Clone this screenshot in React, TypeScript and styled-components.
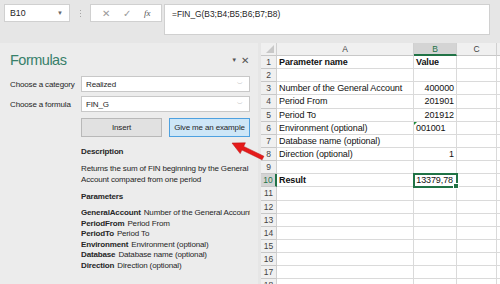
import { Fragment } from "react";
import styled, { createGlobalStyle, css } from "styled-components";

const GlobalStyle = createGlobalStyle`
  html, body { margin: 0; padding: 0; }
  body {
    background: #e6e6e6;
    font-family: "Liberation Sans", "Noto Sans", sans-serif;
    color: #262626;
  }
`;

const Window = styled.div`
  position: relative;
  width: 500px;
  height: 284px;
  overflow: hidden;
  display: flex;
  flex-direction: column;
  background: #e6e6e6;
`;

const TopBar = styled.div`
  height: 43px;
  flex-shrink: 0;
  display: flex;
  align-items: flex-start;
  padding: 4px 0 0 4px;
  box-sizing: border-box;
`;

const NameBox = styled.div`
  width: 66px;
  height: 18px;
  box-sizing: border-box;
  background: #fff;
  border: 1px solid #d0d0d0;
  display: flex;
  align-items: center;
  justify-content: space-between;
  padding: 0 6px 0 5px;
  font-size: 8.8px;
`;

const Caret = styled.span`
  font-size: 6px;
  color: #666;
`;

const Grip = styled.div`
  width: 20px;
  height: 18px;
  display: flex;
  flex-direction: column;
  align-items: center;
  justify-content: center;
  gap: 2px;

  span {
    width: 1px;
    height: 1px;
    background: #a6a6a6;
  }
`;

const FxBox = styled.div`
  width: 72px;
  height: 18px;
  box-sizing: border-box;
  background: #fff;
  border: 1px solid #d0d0d0;
  display: flex;
  align-items: center;
  justify-content: space-around;
  padding: 0 4px;
  color: #9a9a9a;
  font-size: 10px;
`;

const Fx = styled.span`
  font-family: "Liberation Serif", serif;
  font-style: italic;
  font-size: 9px;
  color: #555;
`;

const FormulaInput = styled.div`
  margin-left: 2px;
  width: 326px;
  height: 31px;
  box-sizing: border-box;
  background: #fff;
  border: 1px solid #d0d0d0;
  padding: 3px 7px;
  font-size: 8.4px;
  line-height: 12px;
`;

const Main = styled.div`
  flex: 1;
  display: flex;
  min-height: 0;
`;

const Panel = styled.div`
  width: 258px;
  flex-shrink: 0;
  box-sizing: border-box;
  padding: 8px 8px 0 10px;
  background: #ececec;
  font-size: 8px;
  letter-spacing: -0.15px;
`;

const PanelHeader = styled.div`
  display: flex;
  align-items: center;
  justify-content: space-between;
  height: 18px;
`;

const Title = styled.h2`
  margin: 0;
  font-family: "Liberation Sans", sans-serif;
  font-weight: 400;
  font-size: 14.5px;
  letter-spacing: -0.5px;
  color: #37806a;
`;

const PaneControls = styled.div`
  display: flex;
  align-items: center;
  gap: 4px;
  color: #555;
  font-size: 10px;
  padding-right: 1px;
`;

const Form = styled.div`
  margin-top: 7px;
  display: grid;
  grid-template-columns: 71px 169px;
  row-gap: 4px;
`;

const Label = styled.div`
  height: 16px;
  display: flex;
  align-items: center;
  white-space: nowrap;
`;

const Select = styled.div`
  height: 16px;
  box-sizing: border-box;
  background: #fff;
  border: 1px solid #c8c8c8;
  display: flex;
  align-items: center;
  justify-content: space-between;
  padding: 0 6px 0 4px;
`;

const SelectCaret = styled.span`
  font-size: 6px;
  color: #888;
`;

const Buttons = styled.div`
  grid-column: 2;
  margin-top: 2px;
  display: flex;
  gap: 7px;
`;

const Button = styled.div<{ $primary?: boolean }>`
  flex: 1;
  height: 19px;
  box-sizing: border-box;
  display: flex;
  align-items: center;
  justify-content: center;
  white-space: nowrap;
  border: 1px solid ${(p) => (p.$primary ? "#4ea1e0" : "#b8b8b8")};
  background: ${(p) => (p.$primary ? "#cde6f7" : "#e1e1e1")};
`;

const Info = styled.div`
  grid-column: 2;
  margin-top: 5px;
  line-height: 11px;
`;

const Heading = styled.div`
  font-weight: 700;
  margin-bottom: 6px;
`;

const Paragraph = styled.div`
  margin-bottom: 6px;
`;

const ParamList = styled.div`
  line-height: 10.5px;
  white-space: nowrap;
  overflow: hidden;
`;

const ParamName = styled.b`
  font-weight: 700;
  margin-right: 3px;
`;

const Sheet = styled.div`
  flex: 1;
  margin-left: 3px;
  background: #fff;
  display: grid;
  grid-template-columns: 16px 137px 43px 40px 1fr;
  grid-template-rows: 13px repeat(18, 13.15px);
  font-size: 9px;
  letter-spacing: -0.1px;
  overflow: hidden;
`;

const HeaderCell = styled.div<{ $active?: boolean; $side?: boolean }>`
  background: ${(p) => (p.$active ? "#d4d4d4" : "#f0f0f0")};
  color: ${(p) => (p.$active ? "#217346" : "#444")};
  border-right: 1px solid #d0d0d0;
  border-bottom: 1px solid #c8c8c8;
  box-sizing: border-box;
  display: flex;
  align-items: center;
  justify-content: center;
  font-size: 8.5px;
  letter-spacing: 0;
  ${(p) =>
    p.$active &&
    (p.$side
      ? css`border-right: 2px solid #217346;`
      : css`border-bottom: 2px solid #217346;`)}
`;

const Corner = styled(HeaderCell)`
  position: relative;
  &::after {
    content: "";
    position: absolute;
    right: 2px;
    bottom: 2px;
    border-left: 8px solid transparent;
    border-bottom: 8px solid #c8c8c8;
  }
`;

const Cell = styled.div<{
  $right?: boolean;
  $bold?: boolean;
  $selected?: boolean;
  $flag?: boolean;
}>`
  position: relative;
  box-sizing: border-box;
  border-right: 1px solid #dadada;
  border-bottom: 1px solid #dadada;
  display: flex;
  align-items: center;
  justify-content: ${(p) => (p.$right ? "flex-end" : "flex-start")};
  padding: 0 2px;
  white-space: nowrap;
  font-weight: ${(p) => (p.$bold ? 700 : 400)};
  color: #111;
  ${(p) =>
    p.$flag &&
    css`
      &::before {
        content: "";
        position: absolute;
        left: 0;
        top: 0;
        border-top: 3px solid #1e8a3a;
        border-right: 3px solid transparent;
      }
    `}
  ${(p) =>
    p.$selected &&
    css`
      outline: 2px solid #217346;
      outline-offset: -1px;
      z-index: 1;
      padding-right: 3px;
      &::after {
        content: "";
        position: absolute;
        right: -3px;
        bottom: -3px;
        width: 4px;
        height: 4px;
        background: #217346;
        border: 1px solid #fff;
      }
    `}
`;

const Arrow = styled.svg`
  position: absolute;
  left: 0;
  top: 0;
  pointer-events: none;
  z-index: 5;
`;

type Row = {
  a?: string;
  b?: string;
  boldA?: boolean;
  boldB?: boolean;
  bLeft?: boolean;
  flag?: boolean;
  selected?: boolean;
};

const rows: Row[] = [
  { a: "Parameter name", b: "Value", boldA: true, boldB: true, bLeft: true },
  {},
  { a: "Number of the General Account", b: "400000" },
  { a: "Period From", b: "201901" },
  { a: "Period To", b: "201912" },
  { a: "Environment (optional)", b: "001001", bLeft: true, flag: true },
  { a: "Database name (optional)" },
  { a: "Direction (optional)", b: "1" },
  {},
  { a: "Result", b: "13379,78", boldA: true, selected: true },
  {}, {}, {}, {}, {}, {}, {}, {},
];

const params = [
  ["GeneralAccount", "Number of the General Account"],
  ["PeriodFrom", "Period From"],
  ["PeriodTo", "Period To"],
  ["Environment", "Environment (optional)"],
  ["Database", "Database name (optional)"],
  ["Direction", "Direction (optional)"],
];

export default function App() {
  return (
    <>
      <GlobalStyle />
      <Window>
        <TopBar>
          <NameBox>
            B10 <Caret>▼</Caret>
          </NameBox>
          <Grip>
            <span />
            <span />
            <span />
          </Grip>
          <FxBox>
            <span>✕</span>
            <span>✓</span>
            <Fx>fx</Fx>
          </FxBox>
          <FormulaInput>=FIN_G(B3;B4;B5;B6;B7;B8)</FormulaInput>
        </TopBar>
        <Main>
          <Panel>
            <PanelHeader>
              <Title>Formulas</Title>
              <PaneControls>
                <span style={{ fontSize: 6 }}>▼</span>
                <span>✕</span>
              </PaneControls>
            </PanelHeader>
            <Form>
              <Label>Choose a category</Label>
              <Select>
                Realized <SelectCaret>﹀</SelectCaret>
              </Select>
              <Label>Choose a formula</Label>
              <Select>
                FIN_G <SelectCaret>﹀</SelectCaret>
              </Select>
              <Buttons>
                <Button>Insert</Button>
                <Button $primary>Give me an example</Button>
              </Buttons>
              <Info>
                <Heading>Description</Heading>
                <Paragraph>
                  Returns the sum of FIN beginning by the General Account
                  compared from one period
                </Paragraph>
                <Heading>Parameters</Heading>
                <ParamList>
                  {params.map(([name, desc]) => (
                    <div key={name}>
                      <ParamName>{name}</ParamName>
                      {desc}
                    </div>
                  ))}
                </ParamList>
              </Info>
            </Form>
          </Panel>
          <Sheet>
            <Corner />
            <HeaderCell>A</HeaderCell>
            <HeaderCell $active>B</HeaderCell>
            <HeaderCell>C</HeaderCell>
            <HeaderCell />
            {rows.map((r, i) => (
              <Fragment key={i}>
                <HeaderCell $active={r.selected} $side>
                  {i + 1}
                </HeaderCell>
                <Cell $bold={r.boldA}>{r.a}</Cell>
                <Cell
                  $right={!r.bLeft}
                  $bold={r.boldB}
                  $flag={r.flag}
                  $selected={r.selected}
                >
                  {r.b}
                </Cell>
                <Cell />
                <Cell />
              </Fragment>
            ))}
          </Sheet>
        </Main>
        <Arrow width="500" height="284" viewBox="0 0 500 284">
          <polygon
            points="232,143 245.4,142.8 243.7,146.4 263.9,156.2 262.1,159.8 241.9,150 240.2,153.6"
            fill="#e51b1b"
            stroke="#b80f0f"
            strokeWidth="0.5"
          />
        </Arrow>
      </Window>
    </>
  );
}
